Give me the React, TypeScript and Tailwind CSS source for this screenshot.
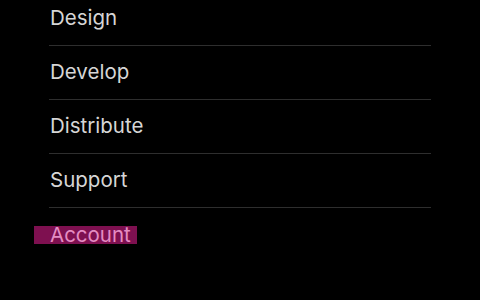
import React from 'react';

const items = ['Design', 'Develop', 'Distribute', 'Support'];

const App = () => {
    return (
        <div className="w-[480px] h-[300px] bg-black overflow-hidden" style={{ fontFamily: 'Inter, "Liberation Sans", sans-serif' }}>
            <ul className="ml-[49px] w-[382px] -mt-[8px]">
                {items.map(item => (
                    <li key={item} className="h-[54px] flex items-center border-b border-[#2e2e2e] pl-px text-[20.5px] text-[#d6d6d6]">
                        {item}
                    </li>
                ))}
                <li className="h-[54px] flex items-center text-[20.5px]">
                    <span className="-ml-[15px] pl-[16px] pr-[6px] h-[18px] leading-[18px] bg-[#7e1050] text-[#e58cc3]">
                        Account
                    </span>
                </li>
            </ul>
        </div>
    );
};

export default App;
